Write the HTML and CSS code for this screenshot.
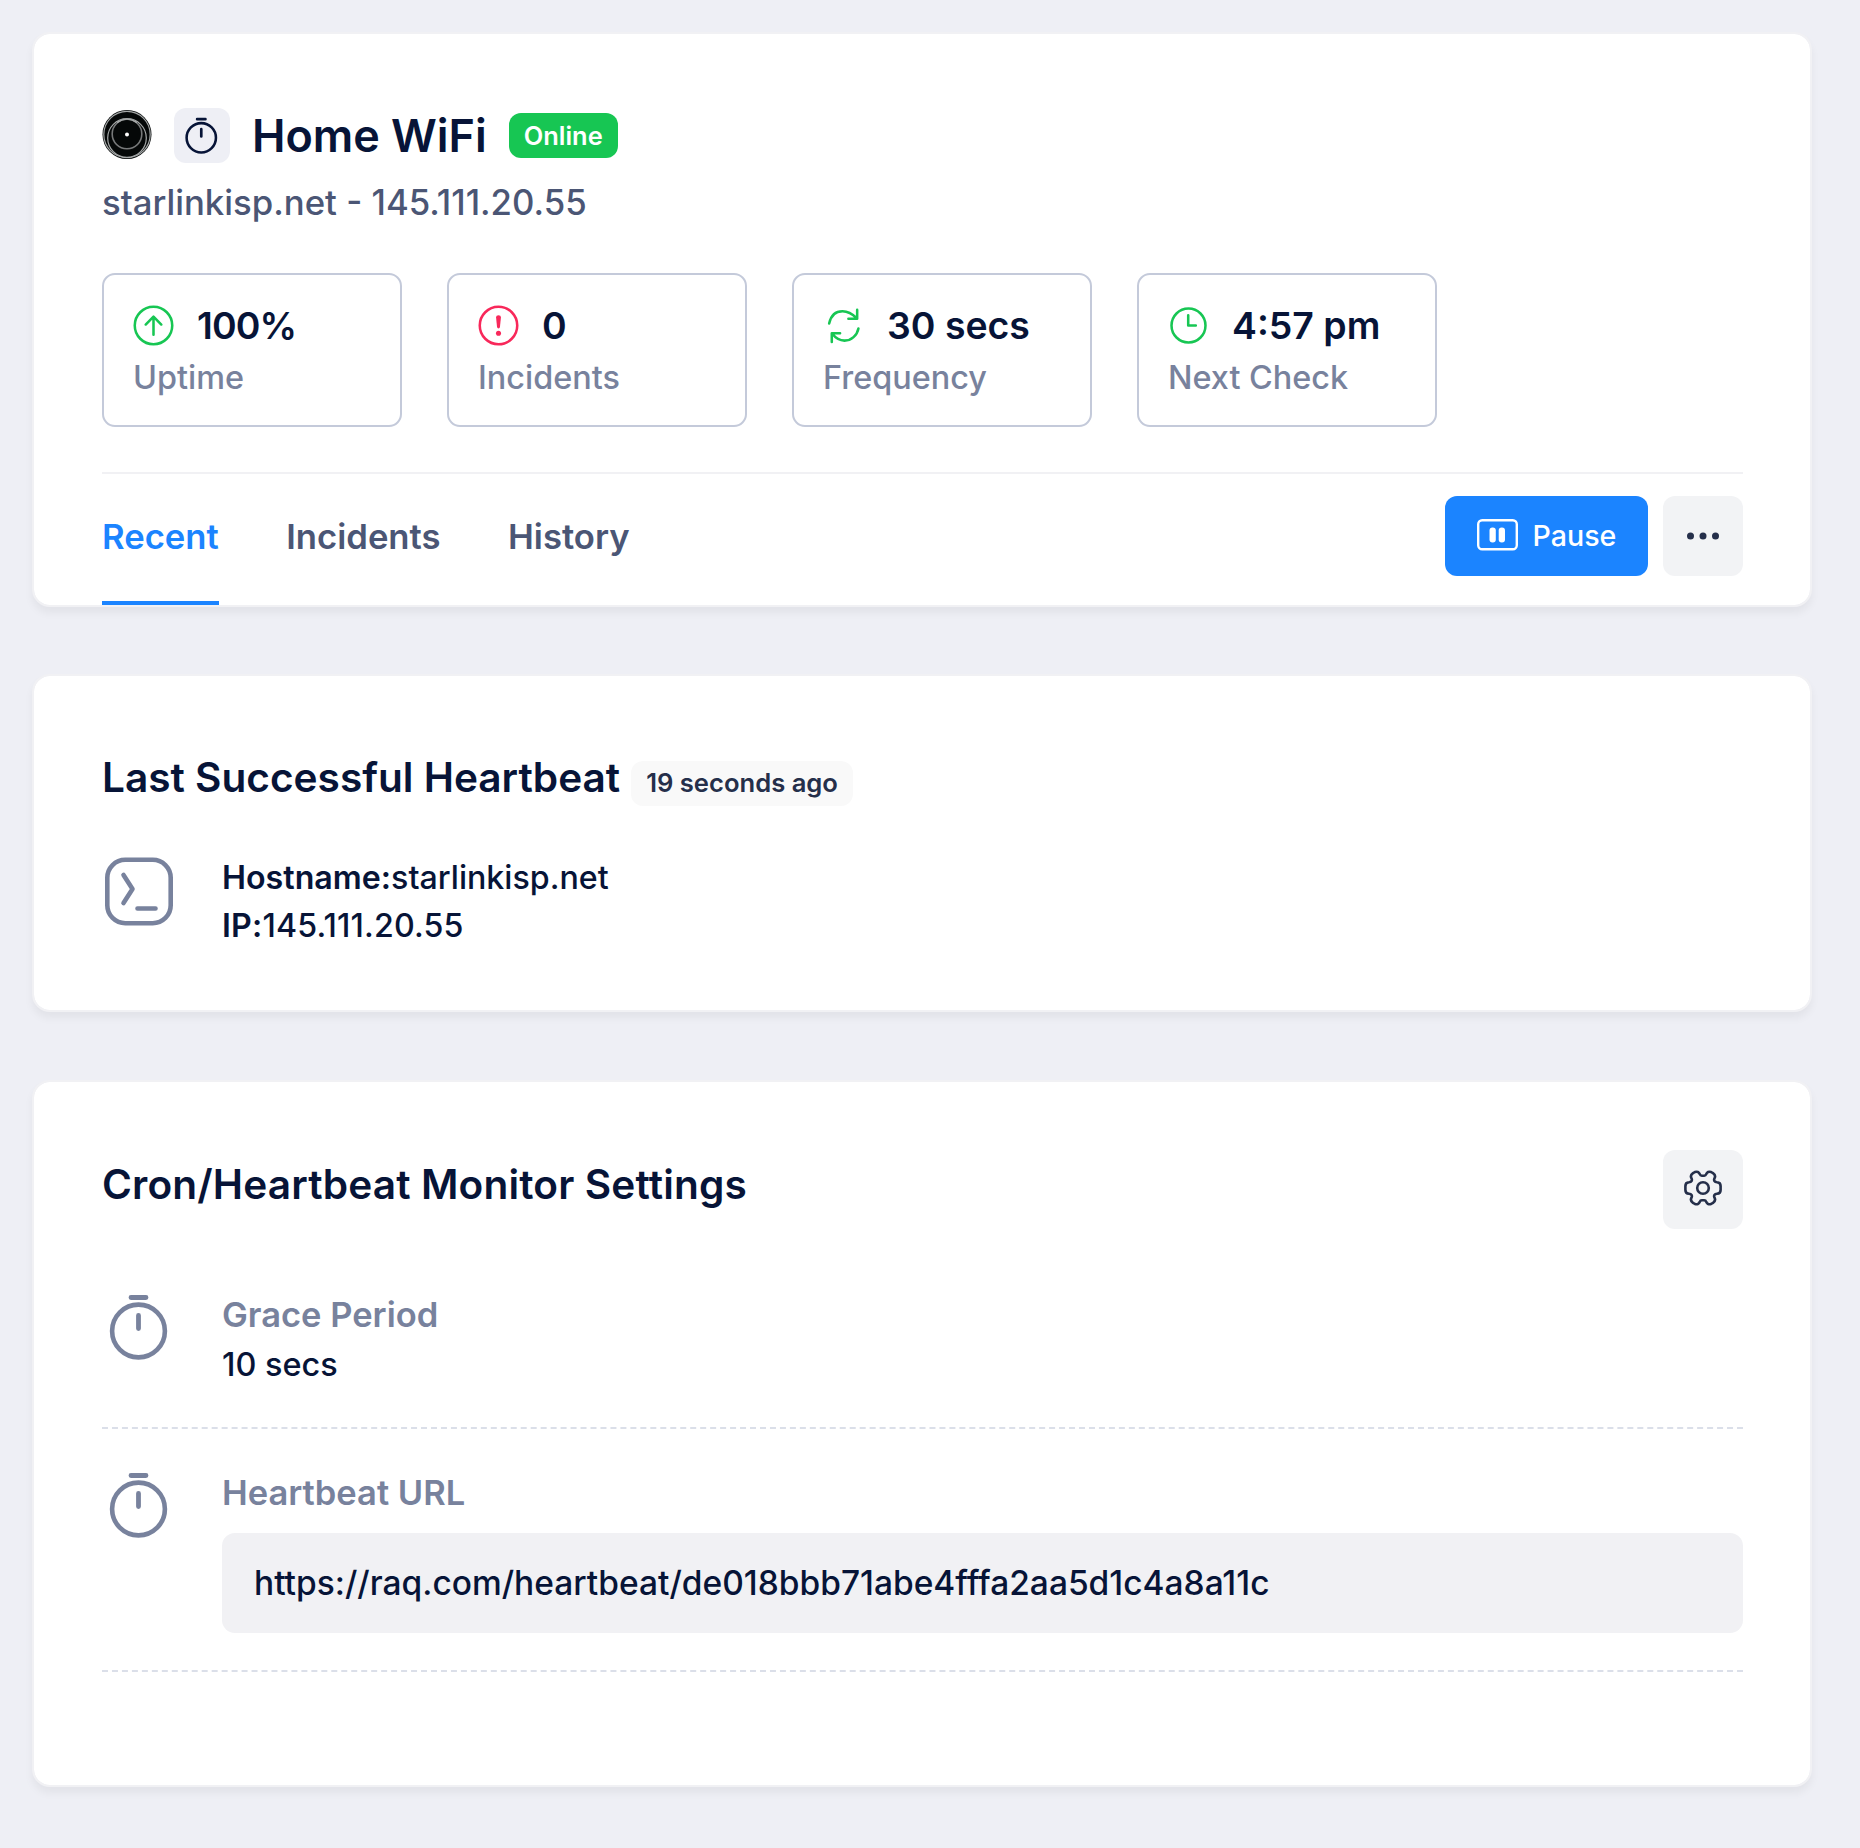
FILE: index.html
```
<!DOCTYPE html>
<html lang="en">
<head>
    <meta charset="UTF-8">
    <meta name="viewport" content="width=device-width, initial-scale=1.0">
    <title>Home WiFi - Monitor</title>
    <link rel="stylesheet" href="styles.css">
</head>
<body>
    <!-- shared stopwatch icon -->
    <svg class="defs" width="0" height="0">
        <symbol id="stopwatch" viewBox="0 0 72 72">
            <circle cx="36.500" cy="41" r="26.400" fill="none" stroke="currentColor" stroke-width="4.600"/>
            <path d="M29 7.500h15M36.500 25.500v13" fill="none" stroke="currentColor" stroke-width="4.800" stroke-linecap="round"/>
        </symbol>
    </svg>

    <div class="container">
        <div class="card overview">
            <div class="title-row">
                <svg class="avatar" viewBox="0 0 50 50">
                    <circle cx="25" cy="24.500" r="24.500" fill="#050808"/>
                    <g fill="none" stroke="#a5a8a8">
                        <circle cx="25" cy="24.500" r="23.200" stroke-width="1.200"/>
                        <circle cx="25" cy="28" r="19.300" stroke-width="1.200"/>
                        <circle cx="25" cy="24" r="14.800" stroke-width="1.600" stroke="#77797a"/>
                        <path d="M15 12.500q10-7 20 0" stroke-width="1.600"/>
                    </g>
                    <circle cx="25" cy="24.500" r="2" fill="#fff"/>
                </svg>
                <span class="type-icon"><svg><use href="#stopwatch"/></svg></span>
                <h1>Home WiFi</h1>
                <span class="badge badge-success">Online</span>
            </div>
            <div class="host">starlinkisp.net - 145.111.20.55</div>

            <div class="stats">
                <div class="stat">
                    <div class="stat-value">
                        <svg class="green" viewBox="0 0 42 42"><circle cx="21" cy="21" r="19.200"/><path d="M21 30.500V12M13 20l8-8 8 8"/></svg>
                        <span class="percent">100%</span>
                    </div>
                    <div class="stat-label">Uptime</div>
                </div>
                <div class="stat">
                    <div class="stat-value">
                        <svg class="red" viewBox="0 0 42 42"><circle cx="21" cy="21" r="19.200"/><path class="fill" d="M18.500 12.500q0-2 2.500-2t2.500 2l-1 10q-.2 1.500-1.500 1.500t-1.500-1.500z"/><circle class="fill" cx="21" cy="29" r="2.600"/></svg>
                        <span>0</span>
                    </div>
                    <div class="stat-label">Incidents</div>
                </div>
                <div class="stat">
                    <div class="stat-value">
                        <svg class="green" viewBox="0 0 42 42"><path d="M6.300 19C8 11 13 6.400 20 6.400C26 6.400 30 9 34.500 13.500M35 5v9h-9M36.300 24C35 31 29 36.500 22 36.500C17 36.500 13 34 9.500 29.500M9 38v-9h8.500"/></svg>
                        <span>30 secs</span>
                    </div>
                    <div class="stat-label">Frequency</div>
                </div>
                <div class="stat">
                    <div class="stat-value">
                        <svg class="green" viewBox="0 0 42 42"><circle cx="21" cy="21" r="17.400"/><path d="M20.700 10.500V21h7.800"/></svg>
                        <span>4:57 pm</span>
                    </div>
                    <div class="stat-label">Next Check</div>
                </div>
            </div>

            <div class="toolbar">
                <nav class="tabs">
                    <a class="tab active">Recent</a>
                    <a class="tab">Incidents</a>
                    <a class="tab">History</a>
                </nav>
                <div class="actions">
                    <button class="btn btn-primary">
                        <svg width="41" height="32" viewBox="0 0 41 32"><rect x="1.200" y="1.200" width="38.600" height="29" rx="4" fill="none" stroke="#fff" stroke-width="2.400"/><rect x="12.500" y="8.500" width="6.300" height="15" rx="3" fill="#fff"/><rect x="21.700" y="8.500" width="6.300" height="15" rx="3" fill="#fff"/></svg>
                        Pause
                    </button>
                    <button class="btn btn-light">
                        <svg width="34" height="8" viewBox="0 0 34 8"><circle cx="4.500" cy="4" r="3.500"/><circle cx="17" cy="4" r="3.500"/><circle cx="29.500" cy="4" r="3.500"/></svg>
                    </button>
                </div>
            </div>
        </div>

        <div class="card heartbeat">
            <div class="heading">
                <h2>Last Successful Heartbeat</h2>
                <span class="badge badge-light">19 seconds ago</span>
            </div>
            <div class="item">
                <svg class="item-icon" viewBox="0 0 72 72" fill="none" stroke="currentColor" stroke-width="4.600" stroke-linecap="round" stroke-linejoin="round"><rect x="5.300" y="4.800" width="63.400" height="63.400" rx="18"/><path d="M21.500 20l9 14-9 14M35.500 53.500h18"/></svg>
                <div class="item-body lines">
                    <div><b>Hostname:</b>starlinkisp.net</div>
                    <div class="ip"><b>IP:</b>145.111.20.55</div>
                </div>
            </div>
        </div>

        <div class="card settings">
            <div class="heading">
                <h2>Cron/Heartbeat Monitor Settings</h2>
                <button class="btn btn-light">
                    <svg width="38" height="36" viewBox="0 0 38 36" fill="none" stroke="#252f4a" stroke-width="2.600" stroke-linejoin="round"><circle cx="19" cy="18" r="5.800"/><path d="M19 5.700H20.200Q21.700 5.700 22.200 4.200C23 2 25 1.200 27 2L29 3.200C31 4.500 31.500 6.500 30.500 8.300C29.500 10.500 30.500 12 33 12.200C35.500 12.300 36.600 14 36.600 16V20C36.600 22 35.500 23.700 33 23.800C30.500 24 29.500 25.500 30.500 27.700C31.500 29.500 31 31.500 29 32.800L27 34C25 34.800 23 34 22.200 31.800Q21.700 30.300 20.200 30.300H17.800Q16.300 30.300 15.800 31.800C15 34 13 34.800 11 34L9 32.800C7 31.500 6.500 29.500 7.500 27.700C8.500 25.500 7.500 24 5 23.800C2.500 23.700 1.400 22 1.400 20V16C1.400 14 2.500 12.300 5 12.200C7.500 12 8.500 10.500 7.500 8.300C6.500 6.500 7 4.500 9 3.200L11 2C13 1.200 15 2 15.800 4.200Q16.300 5.700 17.800 5.700Z"/></svg>
                </button>
            </div>

            <div class="item">
                <svg class="item-icon"><use href="#stopwatch"/></svg>
                <div class="item-body">
                    <div class="item-title">Grace Period</div>
                    <div class="item-text">10 secs</div>
                </div>
            </div>
            <div class="separator"></div>
            <div class="item">
                <svg class="item-icon"><use href="#stopwatch"/></svg>
                <div class="item-body">
                    <div class="item-title">Heartbeat URL</div>
                    <div class="url">https://raq.com/heartbeat/de018bbb71abe4fffa2aa5d1c4a8a11c</div>
                </div>
            </div>
            <div class="separator"></div>
        </div>
    </div>
</body>
</html>
```
FILE: styles.css
```
* {
    box-sizing: border-box;
}
body {
    margin: 0;
    background-color: #eeeff5;
    color: #071437;
    font-family: Inter, sans-serif;
    font-size: 32.4px;
    font-weight: 500;
}
h1, h2 {
    margin: 0;
    font-weight: 600;
}
.defs {
    position: absolute;
}
.container {
    display: flex;
    flex-direction: column;
    padding: 32px 48px 61px 32px;
}
.card {
    background-color: #fff;
    background-clip: padding-box;
    border: 2px solid #f1f1f4;
    border-radius: 18px;
    box-shadow: 0 6px 8px rgba(0, 0, 0, 0.05);
    padding: 0 67px 0 68px;
}

/* overview */
.overview {
    height: 575px;
    margin-bottom: 67px;
    padding-top: 74px;
}
.title-row {
    display: flex;
    align-items: center;
    height: 55px;
}
.avatar {
    width: 50px;
    height: 50px;
    margin-bottom: 1px;
}
.type-icon {
    display: flex;
    align-items: center;
    justify-content: center;
    width: 56px;
    height: 55px;
    margin: 0 22px;
    padding: 0 2px 1px 0;
    background-color: #eeeff5;
    border-radius: 12px;
}
.type-icon svg {
    width: 40px;
    height: 40px;
}
.title-row h1 {
    font-size: 44.9px;
    line-height: 53px;
    margin-right: 22px;
    padding-top: 2px;
}
.badge {
    display: inline-flex;
    align-items: center;
    height: 45px;
    padding: 0 15px;
    border-radius: 12px;
    font-size: 25.6px;
    font-weight: 600;
}
.badge-success {
    background-color: #17c653;
    color: #fff;
    font-size: 25.4px;
}
.badge-light {
    background-color: #f9f9f9;
    color: #252f4a;
}
.host {
    margin-top: 13px;
    color: #4b5675;
    font-size: 34.75px;
    line-height: 53px;
}
.stats {
    display: flex;
    gap: 45.5px;
    margin-top: 44px;
}
.stat {
    width: 299.5px;
    height: 154px;
    padding: 23px 29px;
    border: 2px solid #c4cada;
    border-radius: 13px;
}
.stat-value {
    display: flex;
    align-items: center;
    gap: 23px;
    height: 54px;
    font-size: 37.4px;
    font-weight: 600;
}
.stat-value svg {
    width: 41px;
    height: 41px;
    fill: none;
    stroke: currentColor;
    stroke-width: 2.6;
    stroke-linecap: round;
    stroke-linejoin: round;
}
.stat-value .fill {
    fill: currentColor;
    stroke: none;
}
.percent {
    letter-spacing: -0.9px;
}
.green {
    color: #17c653;
}
.red {
    color: #f8285a;
}
.stat-label {
    color: #78829d;
    line-height: 51px;
}
.toolbar {
    display: flex;
    justify-content: space-between;
    margin-top: 45px;
    border-top: 2px solid #f1f1f4;
}
.tabs {
    display: flex;
    gap: 67.5px;
    height: 131px;
}
.tab {
    padding-top: 36px;
    color: #4b5675;
    font-size: 34.65px;
    font-weight: 600;
    line-height: 53px;
}
.tab.active {
    color: #1b84ff;
    border-bottom: 4px solid #1b84ff;
}
.actions {
    display: flex;
    gap: 15px;
    padding-top: 22px;
}
.btn {
    display: flex;
    align-items: center;
    justify-content: center;
    height: 80px;
    padding: 0;
    border: 0;
    border-radius: 12px;
    font-family: inherit;
    font-size: 28.6px;
    font-weight: 500;
    cursor: pointer;
}
.btn-primary {
    gap: 15px;
    width: 203px;
    padding-bottom: 2px;
    background-color: #1b84ff;
    color: #fff;
}
.btn-light {
    width: 80px;
    background-color: #f2f3f5;
    fill: #252f4a;
}

/* detail cards */
.heading {
    display: flex;
    height: 79px;
}
.heading h2 {
    font-size: 40.6px;
    line-height: 68px;
}
.heading .btn {
    height: 79px;
    padding-bottom: 3px;
}
.heartbeat {
    height: 338px;
    margin-bottom: 68px;
    padding-top: 68px;
}
.heartbeat .badge {
    margin: 17px 0 0 11px;
    padding-bottom: 2px;
}
.heartbeat .item {
    margin-top: 32px;
}
.item {
    display: flex;
}
.item-icon {
    flex: none;
    width: 72px;
    height: 72px;
    margin-right: 48px;
    color: #78829d;
}
.item-body {
    flex: 1;
    line-height: 50px;
}
.item-body.lines {
    margin-top: -1px;
    font-size: 32.2px;
    line-height: 47.6px;
}
.ip {
    letter-spacing: 0.15px;
}
.item b {
    font-weight: 600;
}
.item-title {
    color: #78829d;
    font-size: 34.5px;
    font-weight: 600;
    line-height: 49px;
}
.item-text {
    padding-top: 1px;
}
.settings {
    height: 707px;
    padding-top: 68px;
}
.settings .heading {
    justify-content: space-between;
    margin-bottom: 61px;
}
.settings h2 {
    letter-spacing: 0.15px;
    line-height: 70px;
}
.settings .item {
    min-height: 100px;
}
.separator {
    margin: 37px 0 39px;
    border-top: 2px dashed #dbdfe9;
}
.url {
    height: 100px;
    margin-top: 16px;
    padding: 0 32px;
    background-color: #f1f1f4;
    border-radius: 13px;
    font-size: 33.5px;
    line-height: 101px;
}
```
